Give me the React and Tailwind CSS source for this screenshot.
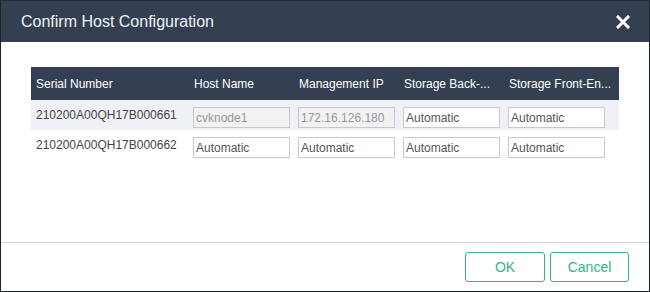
const COLUMNS = [
  { label: 'Serial Number', width: 'w-[158px]' },
  { label: 'Host Name', width: 'w-[105px]' },
  { label: 'Management IP', width: 'w-[105px]' },
  { label: 'Storage Back-...', width: 'w-[105px]' },
  { label: 'Storage Front-En...', width: 'w-[115px]' },
];

const HOSTS = [
  { serial: '210200A00QH17B000661', host: 'cvknode1', ip: '172.16.126.180', locked: true },
  { serial: '210200A00QH17B000662', host: 'Automatic', ip: 'Automatic', locked: false },
];

function Cell({ value, disabled }) {
  return (
    <div className="pl-1 pt-[7px] h-full">
      <input
        readOnly
        value={value}
        className={`block w-[97px] h-[21px] px-[2px] border border-[#c9c8d2] text-[12px] outline-none ${
          disabled ? 'bg-[#f2f2f2] text-[#999]' : 'bg-white text-[#555]'
        }`}
      />
    </div>
  );
}

export default function App() {
  return (
    <div
      className="w-[650px] h-[292px] flex flex-col bg-white border border-[#1b2529] border-t-[#262d3a]"
      style={{ fontFamily: '"Liberation Sans", Arial, sans-serif' }}
    >
      <div className="h-[41px] shrink-0 bg-[#343f52] flex items-center justify-between pl-[20px] pr-[19px]">
        <h1 className="text-[16px] text-[#f1f3f5]">Confirm Host Configuration</h1>
        <svg width="14" height="14" viewBox="0 0 14 14" className="mt-[1px]">
          <path d="M2 2 L12 12 M12 2 L2 12" stroke="#fff" strokeWidth="3" strokeLinecap="square" />
        </svg>
      </div>

      <div className="flex-1 pt-[25px] pl-[30px]">
        <div className="w-[588px] text-[12px]">
          <div className="flex h-[33px] bg-[#343f52] text-white items-center">
            {COLUMNS.map(col => (
              <div key={col.label} className={`${col.width} pl-[5px] whitespace-nowrap`}>
                {col.label}
              </div>
            ))}
          </div>
          {HOSTS.map((row, i) => (
            <div
              key={row.serial}
              className={`flex h-[30px] text-[#444] ${i === 0 ? 'bg-[#f0f1f5]' : 'bg-white'}`}
            >
              <div className="w-[158px] pl-[5px] self-center">{row.serial}</div>
              <div className="w-[105px]"><Cell value={row.host} disabled={row.locked} /></div>
              <div className="w-[105px]"><Cell value={row.ip} disabled={row.locked} /></div>
              <div className="w-[105px]"><Cell value="Automatic" /></div>
              <div className="w-[115px]"><Cell value="Automatic" /></div>
            </div>
          ))}
        </div>
      </div>

      <div className="h-[49px] shrink-0 border-t border-[#d2cfdf] flex justify-end items-start pt-[9px] pr-[20px] gap-[5px]">
        <button className="w-[80px] h-[30px] border border-[#37b184] rounded-[3px] text-[#37b184] text-[14px]">
          OK
        </button>
        <button className="w-[79px] h-[30px] border border-[#37b184] rounded-[3px] text-[#37b184] text-[14px]">
          Cancel
        </button>
      </div>
    </div>
  );
}
